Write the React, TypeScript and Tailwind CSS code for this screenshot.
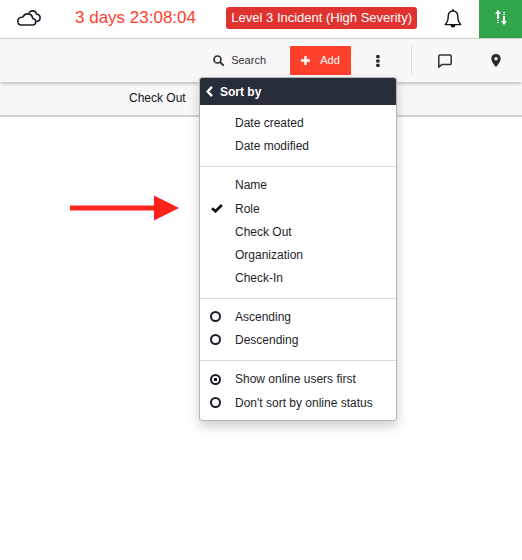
import { useState } from "react";

const dateFields = ["Date created", "Date modified"];
const sortFields = ["Name", "Role", "Check Out", "Organization", "Check-In"];
const directions = ["Ascending", "Descending"];
const onlineModes = ["Show online users first", "Don't sort by online status"];

function CloudsIcon() {
  return (
    <svg className="h-4 w-6" viewBox="0 0 24 16" fill="none" stroke="#1c1f2a" strokeWidth="1.600" strokeLinejoin="round" strokeLinecap="round" aria-hidden="true">
      <path d="M4.500 15H15.300c2 0 3.500-1.400 3.500-3.200 0-1.800-1.300-3.100-3.100-3.300C15.400 5.800 13.200 3.900 10.600 3.900c-2.200 0-4 1.200-4.900 3.300-.4 0-.8 0-1.200.1C2.400 7.500.9 9.100.9 11.200 .9 13.300 2.400 15 4.500 15z" />
      <path d="M12.300 2.300C13.100 1.400 14.300.9 15.500.9c2.100 0 3.700 1.400 4 3.300 2.100.1 3.600 1.600 3.600 3.600 0 2.100-1.500 3.500-3.400 3.700" />
    </svg>
  );
}

function BellIcon() {
  return (
    <svg className="h-[19px] w-[18px]" viewBox="0 0 18 19" fill="none" stroke="#10131c" strokeWidth="1.400" strokeLinejoin="round" aria-hidden="true">
      <path d="M9 2C5.900 2 4.200 4.400 4.200 7.200c0 5-.9 6.300-2.900 8.400h15.400c-2-2.100-2.900-3.400-2.900-8.400C13.800 4.400 12.100 2 9 2z" />
      <path d="M9 .3V2" strokeWidth="1.800" />
      <path d="M7.300 16.200a1.700 1.500 0 0 0 3.400 0z" fill="#10131c" />
    </svg>
  );
}

function TransferIcon() {
  return (
    <svg className="h-[15px] w-3" viewBox="0 0 12 15" fill="#fff" aria-hidden="true">
      <path d="M3 0l3 3.700H4V9H2V3.700H0zM2 10h2v1H2zM2 12h2v1H2zM9 15l-3-3.700h2V6h2v5.300h2zM8 2h2v1H8zM8 4h2v1H8z" />
    </svg>
  );
}

function SearchIcon() {
  return (
    <svg className="h-[11px] w-[11px]" viewBox="0 0 11 11" fill="none" stroke="#333" aria-hidden="true">
      <circle cx="4.500" cy="4.500" r="3.500" strokeWidth="1.700" />
      <path d="M7.200 7.200l2.900 2.900" strokeWidth="2" strokeLinecap="round" />
    </svg>
  );
}

function PlusIcon() {
  return (
    <svg className="h-[9px] w-[9px]" viewBox="0 0 9 9" fill="#fff" aria-hidden="true">
      <path d="M3.300 0h2.400v3.300H9v2.400H5.700V9H3.300V5.700H0V3.300h3.300z" />
    </svg>
  );
}

function DotsIcon() {
  return (
    <svg className="h-3 w-[4px]" viewBox="0 0 4 12" fill="#222" aria-hidden="true">
      <rect x=".2" y="0" width="3.400" height="3.200" rx=".9" />
      <rect x=".2" y="4.400" width="3.400" height="3.200" rx=".9" />
      <rect x=".2" y="8.800" width="3.400" height="3.200" rx=".9" />
    </svg>
  );
}

function ChatIcon() {
  return (
    <svg className="h-[14px] w-[14px]" viewBox="0 0 14 14" fill="none" stroke="#333" strokeWidth="1.500" strokeLinejoin="round" aria-hidden="true">
      <path d="M2 .9h10c.7 0 1.200.5 1.200 1.200v7.300c0 .7-.5 1.200-1.200 1.200H3.700L.8 13.200V2.100C.8 1.400 1.300.9 2 .9z" />
    </svg>
  );
}

function PinIcon() {
  return (
    <svg className="h-[13px] w-[10px]" viewBox="0 0 10 13" fill="#2b2b2b" aria-hidden="true">
      <path fillRule="evenodd" d="M5 0C2.200 0 .3 2 .3 4.700.3 8 5 13 5 13s4.700-5 4.700-8.300C9.700 2 7.800 0 5 0zm0 3a1.700 1.700 0 1 1 0 3.400A1.700 1.700 0 0 1 5 3z" />
    </svg>
  );
}

function BackIcon() {
  return (
    <svg className="h-[11px] w-[7px]" viewBox="0 0 7 11" fill="none" stroke="#fff" strokeWidth="2.400" aria-hidden="true">
      <path d="M6 .9L1.600 5.500 6 10.100" />
    </svg>
  );
}

function CheckIcon() {
  return (
    <svg className="h-[9px] w-3" viewBox="0 0 12 9" fill="none" stroke="#10131c" strokeWidth="2.800" aria-hidden="true">
      <path d="M1 4.200l3.500 3L10.900 1" />
    </svg>
  );
}

function FieldGroup({ items, value, onPick }: { items: string[]; value: string; onPick: (v: string) => void }) {
  return (
    <div className="pt-1.5 pb-[9px]">
      {items.map((item) => (
        <button
          key={item}
          type="button"
          role="menuitemradio"
          aria-checked={item === value}
          onClick={() => onPick(item)}
          className={`flex w-full items-center text-left ${item === value ? "h-6 pt-px" : "h-[23px]"}`}
        >
          <span className="flex w-[35px] pl-[11px]">{item === value && <CheckIcon />}</span>
          {item}
        </button>
      ))}
    </div>
  );
}

function RadioGroup({ name, items, value, onPick, last = false }: { name: string; items: string[]; value: string; onPick: (v: string) => void; last?: boolean }) {
  return (
    <div className={last ? "pt-1.5 pb-1.5" : "pt-1.5 pb-[9px]"}>
      {items.map((item) => (
        <label key={item} className={`flex items-center ${item === value ? "h-6" : "h-[23px]"}`}>
          <span className="flex w-[35px] pl-[10px]">
            <input
              type="radio"
              name={name}
              checked={item === value}
              onChange={() => onPick(item)}
              className="h-[11px] w-[11px] appearance-none rounded-full border-2 border-[#1c1f2a] checked:bg-[radial-gradient(circle,#10131c_1.5px,transparent_2px)]"
            />
          </span>
          {item}
        </label>
      ))}
    </div>
  );
}

function SortMenu() {
  const [field, setField] = useState("Role");
  const [direction, setDirection] = useState("");
  const [online, setOnline] = useState(onlineModes[0]);
  return (
    <div role="menu" aria-label="Sort by" className="absolute top-full right-0 z-10 w-[198px] divide-y divide-[#dcdcdc] overflow-hidden rounded-[3px] border border-[#b4b4b4] bg-white text-xs text-[#1c1f2a] shadow-[0_5px_12px_rgba(0,0,0,0.2)]">
      <button type="button" className="flex h-[27px] w-full items-center gap-[7px] border-b-0 bg-[#282d3a] pl-[6px] font-bold text-white">
        <BackIcon />
        Sort by
      </button>
      <FieldGroup items={dateFields} value={field} onPick={setField} />
      <FieldGroup items={sortFields} value={field} onPick={setField} />
      <RadioGroup name="direction" items={directions} value={direction} onPick={setDirection} />
      <RadioGroup name="online" items={onlineModes} value={online} onPick={setOnline} last />
    </div>
  );
}

export default function App() {
  return (
    <div className="min-h-screen bg-white font-['Liberation_Sans',Arial,sans-serif] text-[#1c1f2a]">
      <header className="flex h-[39px] items-stretch justify-between border-b border-[#dedede] pl-[17px]">
        <div className="flex items-center gap-[34px] pb-[3px]">
          <CloudsIcon />
          <time className="text-[17px] leading-5 text-[#ff402c]">3 days 23:08:04</time>
        </div>
        <div className="flex">
          <div className="flex items-center gap-[27px] pr-[17px] pb-[2px]">
            <span className="rounded-[3px] bg-[#e0332f] px-[5px] text-[13px] leading-[22px] whitespace-nowrap text-white">Level 3 Incident (High Severity)</span>
            <button type="button" aria-label="Notifications">
              <BellIcon />
            </button>
          </div>
          <button type="button" aria-label="Sync" className="flex h-[38px] w-[43px] items-center justify-center bg-[#31a64b] pb-1">
            <TransferIcon />
          </button>
        </div>
      </header>

      <nav className="relative flex h-[43px] items-center justify-end bg-[#f8f8f8] text-[11px] text-[#333] shadow-[0_1px_4px_rgba(0,0,0,0.3)]">
        <button type="button" className="mr-6 flex items-center gap-[7px]">
          <SearchIcon />
          Search
        </button>
        <button type="button" className="mr-[6px] flex h-[29px] w-[61px] items-center justify-center gap-[10px] rounded-[1px] bg-[#ff402c] text-white">
          <PlusIcon />
          Add
        </button>
        <div className="relative flex h-[33px] items-center">
          <button type="button" aria-label="More" className="flex h-8 w-10 items-center justify-center pl-px">
            <DotsIcon />
          </button>
          <SortMenu />
        </div>
        <div className="ml-[14px] h-[29px] w-px bg-[#dcdcdc]" />
        <button type="button" aria-label="Messages" className="ml-2 flex h-8 w-[50px] items-center justify-center">
          <ChatIcon />
        </button>
        <button type="button" aria-label="Map" className="flex h-8 w-[52px] items-center justify-center">
          <PinIcon />
        </button>
      </nav>

      <div className="flex h-[35px] items-center border-b-2 border-[#d2d2d2] bg-[#f8f8f8] pl-[129px] text-xs text-[#10131c]">
        <span className="pb-[2px]">Check Out</span>
      </div>

      <main className="pt-[78px] pl-[70px]">
        <svg className="h-[26px] w-[109px]" viewBox="0 0 109 26" fill="#ff231c" role="img" aria-label="Arrow pointing to the selected sort field">
          <path d="M0 10.500h84V.5l25 12.500-25 12.500v-10H0z" />
        </svg>
      </main>
    </div>
  );
}
